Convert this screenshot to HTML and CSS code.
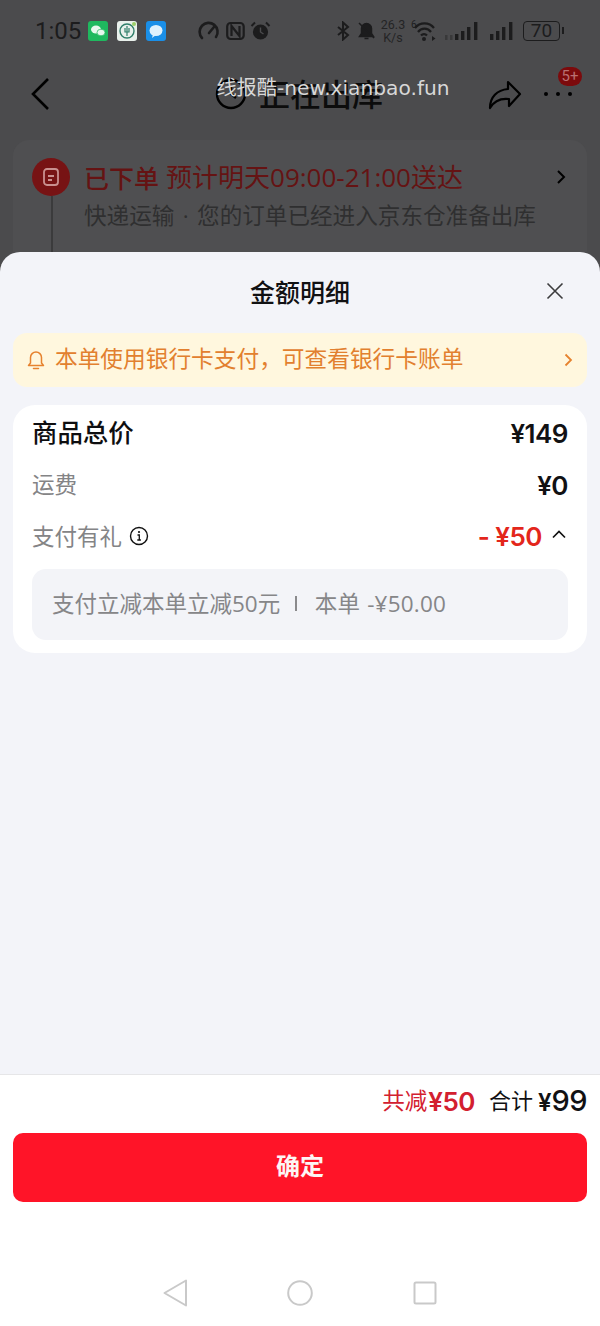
FILE: index.html
```html
<!DOCTYPE html>
<html lang="zh-CN">
<head>
<meta charset="utf-8">
<title>金额明细</title>
<link rel="stylesheet" href="styles.css">
</head>
<body>
<div class="page">
  <div class="behind">
    <div class="status">
      <span class="time">1:05</span>
      <span class="apps">
        <svg class="app" viewBox="0 0 20 20"><rect width="20" height="20" rx="3" fill="#1fb95f"/><ellipse cx="8" cy="8.5" rx="5" ry="4" fill="#e8f8ee"/><ellipse cx="13" cy="11.5" rx="4" ry="3.3" fill="#e8f8ee" stroke="#1fb95f" stroke-width=".7"/></svg>
        <svg class="app" viewBox="0 0 20 20"><rect width="20" height="20" rx="3" fill="#e9f1ec"/><circle cx="10" cy="10" r="7" fill="none" stroke="#2f7f6a" stroke-width="1.4"/><path d="M10 5v10M8 7v4h4V7" fill="none" stroke="#2f7f6a" stroke-width="1.2"/><circle cx="17" cy="3" r="2" fill="#9ccf6a"/></svg>
        <svg class="app" viewBox="0 0 20 20"><rect width="20" height="20" rx="3" fill="#1a8fe8"/><ellipse cx="10" cy="9.5" rx="6.5" ry="5.5" fill="#dff1fd"/><path d="M7 13l-1 4 4-3z" fill="#dff1fd"/></svg>
      </span>
      <span class="sys-left">
        <svg class="sys" width="23" height="20" viewBox="0 0 23 20"><path d="M4 17a9 9 0 1 1 14-1M11 12l5-6" fill="none" stroke="#1c1c1d" stroke-width="2.6" stroke-linecap="round"/></svg>
        <svg class="sys" width="19" height="20" viewBox="0 0 19 20"><rect x="1.200" y="2" width="16.500" height="16" rx="3.500" fill="none" stroke="#1c1c1d" stroke-width="2.200"/><path d="M5.500 15V5l8 10V5" fill="none" stroke="#1c1c1d" stroke-width="2.200"/></svg>
        <svg class="sys" width="21" height="20" viewBox="0 0 21 20"><circle cx="10.500" cy="11" r="7.600" fill="#1c1c1d"/><path d="M10.500 6.500V11l3 2" fill="none" stroke="#4b4b4d" stroke-width="1.400"/><path d="M1.500 5L5 1.500M19.500 5L16 1.500" stroke="#1c1c1d" stroke-width="2"/></svg>
      </span>
      <span class="sys-right">
        <svg class="sys s-bt" width="15" height="20" viewBox="0 0 15 20"><path d="M2 6l10 8-5 4.500V1.500l5 4.500-10 8" fill="none" stroke="#1c1c1d" stroke-width="2"/></svg>
        <svg class="sys s-bell" width="19" height="20" viewBox="0 0 19 20"><path d="M9.500 2.500a5 5 0 0 1 5 5v5l2 3H2.500l2-3v-5a5 5 0 0 1 5-5zM7.500 17.500h4M2 2l15 15" fill="#1c1c1d" stroke="#1c1c1d" stroke-width="1.500"/></svg>
        <span class="speed"><span>26.3</span><span>K/s</span></span>
        <span class="wifi">
          <span class="wifi-label">6</span>
          <svg width="27" height="20" viewBox="0 0 27 20"><path d="M5 7a12 12 0 0 1 19 0M8 11a8 8 0 0 1 13 0M11 14.500a4 4 0 0 1 6 0" fill="none" stroke="#1c1c1d" stroke-width="2.200"/><circle cx="14" cy="18" r="2" fill="#1c1c1d"/><path d="M22 15v5l3.500-2.500z" fill="#1c1c1d"/></svg>
        </span>
        <svg class="sys s-sig1" width="35" height="20" viewBox="0 0 35 20"><g fill="#1c1c1d"><rect x="0" y="14" width="2.500" height="5" fill="#39393a"/><rect x="5" y="14" width="2.500" height="5" fill="#39393a"/><rect x="10" y="13" width="3.400" height="6"/><rect x="16" y="10" width="3.400" height="9"/><rect x="22" y="6" width="3.400" height="13"/><rect x="29" y="1" width="3.400" height="18"/></g></svg>
        <svg class="sys s-sig2" width="25" height="20" viewBox="0 0 25 20"><g fill="#1c1c1d"><rect x="0" y="13" width="3.400" height="6"/><rect x="6" y="10" width="3.400" height="9"/><rect x="12" y="6" width="3.400" height="13"/><rect x="19" y="1" width="3.400" height="18"/></g></svg>
        <span class="battery"><span class="battery-body">70</span><span class="battery-tip"></span></span>
      </span>
    </div>
    <div class="nav">
      <svg class="back" width="20" height="34" viewBox="0 0 20 34"><path d="M18 2L3 17l15 15" fill="none" stroke="#000" stroke-width="2.600"/></svg>
      <div class="nav-title">
        <svg width="32" height="32" viewBox="0 0 32 32"><circle cx="16" cy="16" r="14" fill="none" stroke="#000" stroke-width="2.400"/><path d="M16 9v7l5 4" fill="none" stroke="#000" stroke-width="2.400"/></svg>
        <span>正在出库</span>
      </div>
      <svg class="share" width="34" height="30" viewBox="0 0 34 30"><path d="M20 2l12 12-11 12v-7C12 18 6 21 2 28c0-11 7-18 18-19z" fill="none" stroke="#000" stroke-width="2.200" stroke-linejoin="round"/></svg>
      <span class="more"><i></i><i></i><i></i><b class="badge">5+</b></span>
    </div>
    <div class="order-card">
      <div class="order-head">
        <span class="order-icon"><svg width="18" height="20" viewBox="0 0 18 20"><rect x="2" y="2" width="14" height="16" rx="3" fill="none" stroke="#c9908f" stroke-width="1.800"/><path d="M6 9h6M6 13h4" stroke="#c9908f" stroke-width="1.800"/></svg></span>
        <strong class="order-state">已下单</strong>
        <span class="order-eta">预计明天09:00-21:00送达</span>
        <svg class="order-arrow" width="10" height="16" viewBox="0 0 10 16"><path d="M2 2l6 6-6 6" fill="none" stroke="#000" stroke-width="2"/></svg>
      </div>
      <div class="order-sub">快递运输 · 您的订单已经进入京东仓准备出库</div>
      <span class="order-line"></span>
    </div>
    <div class="watermark">线报酷-new.xianbao.fun</div>
  </div>

  <div class="sheet">
    <div class="sheet-head">
      <h1>金额明细</h1>
      <svg class="close" width="18" height="18" viewBox="0 0 18 18"><path d="M1.500 1.500l15 15M16.500 1.500l-15 15" stroke="#3c3c3e" stroke-width="1.600"/></svg>
    </div>
    <div class="notice">
      <svg width="18" height="20" viewBox="0 0 18 20"><path d="M9 2a5.500 5.500 0 0 1 5.500 5.500V13l2 2.500h-15l2-2.500V7.500A5.500 5.500 0 0 1 9 2zM6.500 18.500h5" fill="none" stroke="#e6822e" stroke-width="1.500" stroke-linejoin="round" stroke-linecap="round"/></svg>
      <span class="notice-text">本单使用银行卡支付，可查看银行卡账单</span>
      <svg class="notice-arrow" width="9" height="14" viewBox="0 0 9 14"><path d="M1.500 1.500L7 7l-5.500 5.500" fill="none" stroke="#e6822e" stroke-width="1.800"/></svg>
    </div>
    <div class="detail">
      <div class="row row-total">
        <span class="label-main">商品总价</span>
        <span class="amount">¥149</span>
      </div>
      <div class="row row-ship">
        <span class="label">运费</span>
        <span class="amount">¥0</span>
      </div>
      <div class="row row-gift">
        <span class="label-group">
          <span class="label">支付有礼</span>
          <svg width="20" height="20" viewBox="0 0 20 20"><circle cx="10" cy="10" r="8.500" fill="none" stroke="#111" stroke-width="1.400"/><circle cx="10" cy="6" r="1.100" fill="#111"/><path d="M8.500 9h1.800v5M8.300 14h3.600" fill="none" stroke="#111" stroke-width="1.300"/></svg>
        </span>
        <span class="gift-value">
          <span class="amount amount-red">- ¥50</span>
          <svg width="14" height="9" viewBox="0 0 14 9"><path d="M1 7.500L7 1.500l6 6" fill="none" stroke="#111" stroke-width="1.700"/></svg>
        </span>
      </div>
      <div class="gift-box">
        <span>支付立减本单立减50元</span>
        <i class="divider"></i>
        <span>本单 -¥50.00</span>
      </div>
    </div>
    <div class="footer">
      <div class="summary">
        <span class="saved">共减<b>¥50</b></span>
        <span class="total">合计 <b class="yen">¥</b><b class="total-num">99</b></span>
      </div>
      <button class="confirm" type="button">确定</button>
      <div class="sysnav">
        <svg width="26" height="28" viewBox="0 0 26 28"><path d="M23 1.500v25L1.500 14z" fill="none" stroke="#c9c9c9" stroke-width="2" stroke-linejoin="round"/></svg>
        <svg class="nav-home" width="26" height="26" viewBox="0 0 26 26"><circle cx="13" cy="13" r="11.800" fill="none" stroke="#c9c9c9" stroke-width="2"/></svg>
        <svg width="24" height="24" viewBox="0 0 24 24"><rect x="1.500" y="1.500" width="21" height="21" rx="1.500" fill="none" stroke="#c9c9c9" stroke-width="2"/></svg>
      </div>
    </div>
  </div>
</div>
</body>
</html>
```
FILE: styles.css
```css
* { box-sizing: border-box; }
html, body { margin: 0; padding: 0; }
body {
  width: 600px;
  height: 1326px;
  overflow: hidden;
  font-family: Inter, "Noto Sans CJK SC", sans-serif;
  background: #4b4b4d;
}
.page { width: 600px; height: 1326px; display: flex; flex-direction: column; }

/* dimmed page behind the sheet */
.behind { height: 252px; position: relative; overflow: hidden; background: #4b4b4d; flex: none; }
.status { height: 61px; display: flex; align-items: center; padding: 0 0 0 35px; color: #1c1c1d; }
.time { font: 400 24px/30px Roboto, sans-serif; width: 53px; }
.apps { display: flex; gap: 9px; align-items: center; width: 110px; }
.app { width: 20px; height: 20px; display: block; }
.sys-left { display: flex; align-items: center; gap: 5px; width: 138px; }
.sys-right { display: flex; align-items: center; flex: 1; }
.sys-right .sys { display: block; }
.s-bt { margin-right: 6px; }
.s-bell { margin-right: 4px; }
.speed { display: flex; flex-direction: column; font: 400 12.500px/13px Roboto, sans-serif; align-items: center; width: 26px; color: #242425; margin-right: 4px; flex: none; }
.wifi { display: block; position: relative; width: 27px; margin-right: 8px; flex: none; }
.wifi svg { display: block; }
.wifi-label { position: absolute; left: 1px; top: -1px; font: 400 10px/10px Roboto, sans-serif; }
.s-sig1 { margin-right: 10px; }
.s-sig2 { margin-right: 8px; }
.battery { display: flex; align-items: center; }
.battery-body { width: 37px; height: 20px; border: 1.500px solid #1c1c1d; border-radius: 4px; font: 400 19px/17px Roboto, sans-serif; text-align: center; }
.battery-tip { width: 2px; height: 7px; background: #1c1c1d; margin-left: 2px; }

.nav { height: 66px; position: relative; display: flex; align-items: center; padding: 0 0 0 30px; }
.back { display: block; flex: none; }
.nav-title { display: flex; align-items: center; gap: 12px; margin-left: 165px; font: 500 31px/34px "Noto Sans CJK SC", sans-serif; color: #0c0c0c; flex: none; }
.nav-title span { display: block; margin-top: -2px; }
.share { margin-left: 105px; display: block; margin-top: 2px; flex: none; }
.more { display: flex; gap: 8px; margin-left: 22px; position: relative; flex: none; }
.more i { width: 4px; height: 4px; border-radius: 50%; background: #000; }
.badge { position: absolute; left: 14px; top: -25px; width: 24px; height: 19px; border-radius: 10px; background: #7c0a0c; color: #b97072; font: 400 15px/19px Roboto, sans-serif; text-align: center; }

.order-card { margin: 13px 13px 0; height: 140px; background: #4f4f51; border-radius: 16px; position: relative; padding: 18px 20px 0 19px; }
.order-head { display: flex; align-items: center; height: 38px; }
.order-icon { width: 38px; height: 38px; border-radius: 50%; background: #771314; display: flex; align-items: center; justify-content: center; flex: none; }
.order-state { font: 500 25px/32px "Noto Sans CJK SC", sans-serif; color: #651313; margin-left: 14px; }
.order-eta { font: 400 26px/32px "Open Sans", "Noto Sans CJK SC", sans-serif; color: #651313; margin-left: 7px; flex: 1; white-space: nowrap; }
.order-arrow { display: block; margin-right: 1px; }
.order-sub { font: 400 22.600px/30px "Open Sans", "Noto Sans CJK SC", sans-serif; word-spacing: 2.500px; color: #2f2f30; margin: 5px 0 0 52px; white-space: nowrap; }
.order-line { position: absolute; left: 38px; top: 56px; width: 2px; height: 60px; background: #3b3b3c; }

.watermark { position: absolute; left: 66px; right: 0; top: 75px; text-align: center; font: 400 20.200px/26px "DejaVu Sans", "Noto Sans CJK SC", sans-serif; color: #d8d8d8; }

/* bottom sheet */
.sheet { flex: 1; display: flex; flex-direction: column; background: #f3f4f9; border-radius: 20px 20px 0 0; min-height: 0; }
.sheet-head { height: 81px; flex: none; position: relative; display: flex; justify-content: center; padding-top: 22px; }
.sheet-head h1 { margin: 0; font: 500 25px/34px "Noto Sans CJK SC", sans-serif; color: #111113; }
.close { position: absolute; right: 36px; top: 30px; display: block; }

.notice { margin: 0 13px; height: 54px; flex: none; background: #fff7de; border-radius: 14px; display: flex; align-items: center; padding: 0 14px 0 14px; }
.notice-text { font: 400 22.700px/32px "Noto Sans CJK SC", sans-serif; color: #e2802f; margin: 0 0 4px 10px; flex: 1; white-space: nowrap; }
.notice svg { display: block; flex: none; }

.detail { margin: 18px 13px 0; height: 248px; flex: none; background: #fff; border-radius: 22px; padding: 9px 19px 0; }
.row { display: flex; justify-content: space-between; align-items: center; height: 36px; }
.row-ship { margin-top: 16px; }
.row-gift { margin-top: 16px; }
.label-main { font: 500 25.400px/36px "Noto Sans CJK SC", sans-serif; color: #0e0e10; margin-bottom: 2px; }
.label { font: 400 22.500px/36px "Noto Sans CJK SC", sans-serif; color: #848486; margin-bottom: 3px; display: block; }
.label-group { display: flex; align-items: center; gap: 7px; }
.label-group svg { display: block; margin-left: 0; }
.amount { font: 600 26px/36px Inter, "Noto Sans CJK SC", sans-serif; color: #111113; letter-spacing: -0.500px; margin-top: 4px; }
.amount-red { color: #e3261b; margin-top: 2px; display: block; }
.gift-value { display: flex; align-items: center; gap: 10px; }
.gift-value svg { display: block; margin: 0 2px 3px 0; }
.gift-box { margin-top: 15px; height: 71px; background: #f3f4f8; border-radius: 14px; display: flex; align-items: center; padding: 0 20px 2px; font: 400 22.500px/32px "Open Sans", "Noto Sans CJK SC", sans-serif; word-spacing: 1px; color: #868688; white-space: nowrap; }
.gift-box span:last-child { letter-spacing: 0.200px; }
.divider { width: 1.500px; height: 15px; background: #8a8a8c; margin: 0 18px 0 15px; }

.footer { margin-top: auto; height: 252px; flex: none; background: #fff; border-top: 1px solid #e6e6e8; padding: 8px 13px 0; display: flex; flex-direction: column; }
.summary { display: flex; justify-content: flex-end; align-items: center; height: 36px; gap: 14px; }
.saved { font: 400 22.500px/34px "Noto Sans CJK SC", sans-serif; color: #d3202f; white-space: nowrap; margin-bottom: 3px; }
.saved b { font: 600 26px/34px Inter, sans-serif; letter-spacing: -0.500px; margin-left: 1px; position: relative; top: 2px; }
.total { font: 400 22px/34px "Noto Sans CJK SC", sans-serif; color: #111113; white-space: nowrap; margin-bottom: 3px; }
.yen { font: 600 24px/34px Inter, sans-serif; position: relative; top: 2px; }
.total-num { font: 500 29px/34px Inter, sans-serif; letter-spacing: -0.500px; position: relative; top: 2px; }
.confirm { margin-top: 14px; height: 69px; border: 0; border-radius: 10px; background: #ff1428; color: #fdf5f5; font: 700 24px/34px "Noto Sans CJK SC", sans-serif; flex: none; padding: 0 0 5px; }
.sysnav { display: flex; align-items: center; justify-content: center; gap: 99px; margin-top: 77px; height: 28px; }
.sysnav svg { display: block; }
.nav-home { margin: 0 1px 0 -1px; }
```
